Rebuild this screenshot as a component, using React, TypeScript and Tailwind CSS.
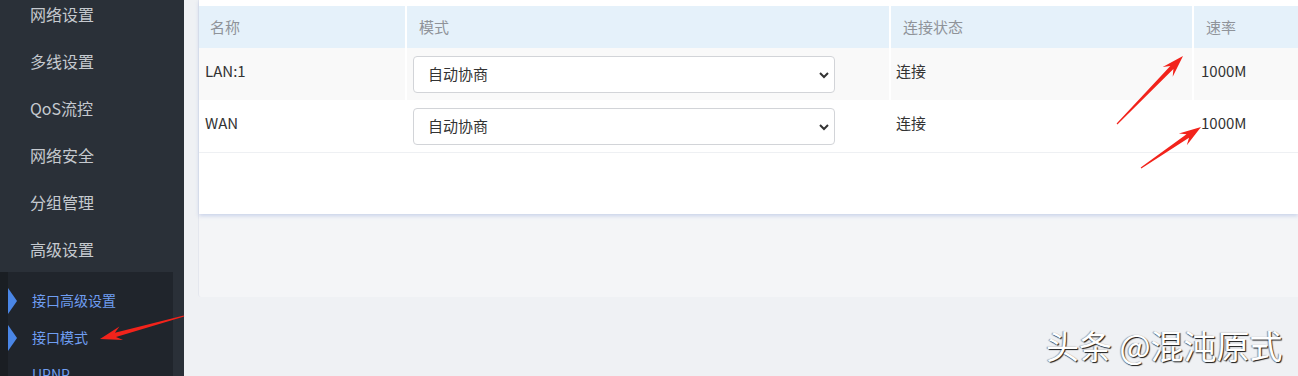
import React from 'react';

const font = { fontFamily: '"Noto Sans CJK SC", "Noto Sans", sans-serif' };

const menu = ['网络设置', '多线设置', 'QoS流控', '网络安全', '分组管理', '高级设置'];
const subMenu = ['接口高级设置', '接口模式', 'UPNP'];

const rows = [
  { name: 'LAN:1', status: '连接', rate: '1000M' },
  { name: 'WAN', status: '连接', rate: '1000M' },
];

// red annotation arrow, tail -> tip
const Arrow = ({ x1, y1, x2, y2 }: { x1: number; y1: number; x2: number; y2: number }) => {
  const dx = x2 - x1;
  const dy = y2 - y1;
  const len = Math.hypot(dx, dy);
  const ux = dx / len;
  const uy = dy / len;
  const nx = -uy;
  const ny = ux;
  const head = 22;
  const bx = x2 - ux * head;
  const by = y2 - uy * head;
  const nbx = x2 - ux * (head - 6);
  const nby = y2 - uy * (head - 6);
  const p = (x: number, y: number) => `${x.toFixed(1)},${y.toFixed(1)}`;
  const pts = [
    p(x1 + nx * 0.6, y1 + ny * 0.6),
    p(nbx + nx * 2.2, nby + ny * 2.2),
    p(bx + nx * 7, by + ny * 7),
    p(x2, y2),
    p(bx - nx * 7, by - ny * 7),
    p(nbx - nx * 2.2, nby - ny * 2.2),
    p(x1 - nx * 0.6, y1 - ny * 0.6),
  ].join(' ');
  return <polygon points={pts} fill="#f2231b" />;
};

export default function App() {
  return (
    <div className="relative flex h-[376px] w-[1298px] overflow-hidden bg-[#eff1f4]" style={font}>
      {/* Sidebar */}
      <aside className="flex w-[184px] shrink-0 flex-col bg-[#2a3038]">
        <ul className="-mt-[10px]">
          {menu.map((m) => (
            <li key={m} className="flex h-[47px] items-center pl-[30px] text-[16px] text-[#c5c9cf]">
              {m}
            </li>
          ))}
        </ul>
        <div className="flex w-[173px] flex-1 bg-[#20252c]">
          <div className="w-[8px] bg-[#1a1e23]" />
          <ul className="flex-1 pt-[10px]">
            {subMenu.map((s, i) => (
              <li key={s} className="flex h-[37px] items-center text-[14px] text-[#6f9ef2]">
                {i < 2 ? (
                  <svg width="9" height="26" viewBox="0 0 9 26" className="shrink-0">
                    <polygon points="0,0 9,13 0,26" fill="#4a86e6" />
                  </svg>
                ) : (
                  <span className="w-[9px]" />
                )}
                <span className="ml-[15px]">{s}</span>
              </li>
            ))}
          </ul>
        </div>
      </aside>

      {/* Main */}
      <main className="flex-1 pl-[14px]">
        <div className="h-[297px] rounded-bl-[3px] border-l border-[#e4e7ee] bg-[#f4f5f7]">
          <div className="h-[214px] bg-white pt-[6px] shadow-[0_2px_4px_rgba(140,160,215,0.4)]">
            <div className="grid grid-cols-[206px_482px_301px_1fr] gap-x-[2px] border-b border-[#eef0f3] bg-white">
              {['名称', '模式', '连接状态', '速率'].map((h, i) => (
                <div
                  key={h}
                  className={`flex h-[42px] items-center bg-[#e5f1fa] text-[15px] text-[#8f9399] ${i === 0 ? 'pl-[11px]' : 'pl-[12px]'}`}
                >
                  {h}
                </div>
              ))}
              {rows.map((r, ri) => {
                const bg = ri === 0 ? 'bg-[#f9f9f9]' : 'bg-white';
                return (
                  <React.Fragment key={r.name}>
                    <div className={`h-[52px] pl-[6px] pt-[12px] text-[15px] leading-[22px] text-[#333] ${bg}`}>{r.name}</div>
                    <div className={`h-[52px] pl-[6px] pt-[8px] ${bg}`}>
                      <div className="flex h-[37px] w-[422px] items-center justify-between rounded-[4px] border border-[#d2d4d8] bg-white pl-[14px] pr-[4px] text-[15px] text-[#333]">
                        <span>自动协商</span>
                        <svg width="12" height="8" viewBox="0 0 12 8">
                          <path d="M2 2 L6 6 L10 2" fill="none" stroke="#333" strokeWidth="2" />
                        </svg>
                      </div>
                    </div>
                    <div className={`h-[52px] pl-[5px] pt-[12px] text-[15px] leading-[22px] text-[#333] ${bg}`}>{r.status}</div>
                    <div className={`h-[52px] pl-[7px] pt-[12px] text-[15px] leading-[22px] text-[#333] ${bg}`}>{r.rate}</div>
                  </React.Fragment>
                );
              })}
            </div>
          </div>
        </div>
      </main>

      {/* Watermark */}
      <div className="absolute left-[1046px] top-[325px] text-[33px] leading-[40px] text-white [text-shadow:1px_1px_1px_rgba(0,0,0,0.9),-1px_0_1px_rgba(0,0,0,0.4)]">
        头条 @混沌原式
      </div>

      {/* Annotation arrows */}
      <svg className="pointer-events-none absolute left-0 top-0" width="1298" height="376">
        <Arrow x1={1117} y1={124} x2={1183} y2={56} />
        <Arrow x1={1141} y1={168} x2={1201} y2={127} />
        <Arrow x1={184} y1={316} x2={100} y2={339} />
      </svg>
    </div>
  );
}
